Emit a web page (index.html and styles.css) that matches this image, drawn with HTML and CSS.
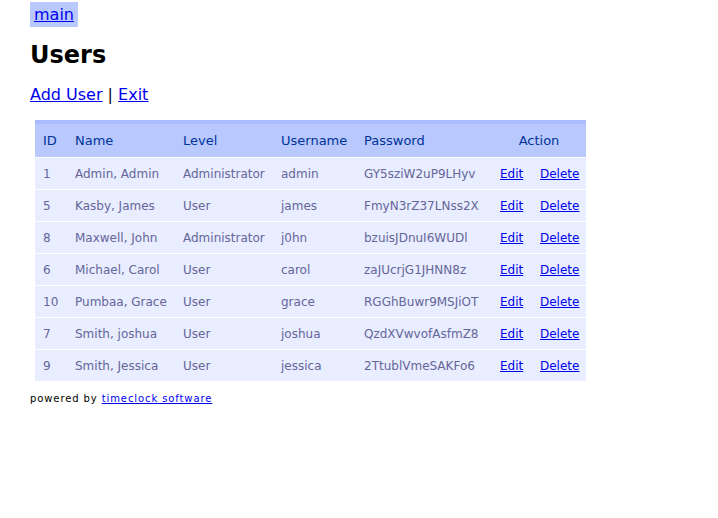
FILE: index.html
```html
<!DOCTYPE html>
<html>
<head>
<meta charset="utf-8">
<title>Users</title>
<link rel="stylesheet" href="styles.css">
</head>
<body>
<div class="page">
  <div class="topnav"><a class="mainlink" href="#">main</a></div>
  <h2 class="title">Users</h2>
  <p class="actions"><a href="#">Add User</a> | <a href="#">Exit</a></p>
  <table class="box-table">
    <colgroup>
      <col class="c-id"><col class="c-name"><col class="c-level"><col class="c-user"><col class="c-pass"><col class="c-edit"><col class="c-del">
    </colgroup>
    <thead>
      <tr><th>ID</th><th>Name</th><th>Level</th><th>Username</th><th>Password</th><th colspan="2" class="center">Action</th></tr>
    </thead>
    <tbody>
      <tr><td>1</td><td>Admin, Admin</td><td>Administrator</td><td>admin</td><td>GY5sziW2uP9LHyv</td><td><a href="#">Edit</a></td><td><a href="#">Delete</a></td></tr>
      <tr><td>5</td><td>Kasby, James</td><td>User</td><td>james</td><td>FmyN3rZ37LNss2X</td><td><a href="#">Edit</a></td><td><a href="#">Delete</a></td></tr>
      <tr><td>8</td><td>Maxwell, John</td><td>Administrator</td><td>j0hn</td><td>bzuisJDnuI6WUDl</td><td><a href="#">Edit</a></td><td><a href="#">Delete</a></td></tr>
      <tr><td>6</td><td>Michael, Carol</td><td>User</td><td>carol</td><td>zaJUcrjG1JHNN8z</td><td><a href="#">Edit</a></td><td><a href="#">Delete</a></td></tr>
      <tr><td>10</td><td>Pumbaa, Grace</td><td>User</td><td>grace</td><td>RGGhBuwr9MSJiOT</td><td><a href="#">Edit</a></td><td><a href="#">Delete</a></td></tr>
      <tr><td>7</td><td>Smith, joshua</td><td>User</td><td>joshua</td><td>QzdXVwvofAsfmZ8</td><td><a href="#">Edit</a></td><td><a href="#">Delete</a></td></tr>
      <tr><td>9</td><td>Smith, Jessica</td><td>User</td><td>jessica</td><td>2TtublVmeSAKFo6</td><td><a href="#">Edit</a></td><td><a href="#">Delete</a></td></tr>
    </tbody>
  </table>
  <p class="footer">powered by <a href="#">timeclock software</a></p>
</div>
</body>
</html>
```
FILE: styles.css
```css
html, body {
  margin: 0;
  padding: 0;
  background: #fff;
}
body {
  font-family: "DejaVu Sans", sans-serif;
  color: #000;
}
a {
  color: #0000ee;
}
.page {
  padding: 2px 30px 0 30px;
}
.topnav {
  height: 25px;
}
.mainlink {
  display: inline-block;
  background: #b9c9fe;
  padding: 3px 4px;
  font-size: 16px;
  line-height: 19px;
}
.title {
  font-size: 24px;
  font-weight: bold;
  line-height: 28px;
  margin: 14px 0 0 0;
}
.actions {
  font-size: 16px;
  line-height: 19px;
  margin: 16px 0 0 0;
}
.box-table {
  margin: 16px 5px 0 5px;
  border-collapse: collapse;
  table-layout: fixed;
  width: 551px;
  text-align: left;
  font-size: 12px;
}
.c-id { width: 32px; }
.c-name { width: 108px; }
.c-level { width: 98px; }
.c-user { width: 83px; }
.c-pass { width: 136px; }
.c-edit { width: 40px; }
.c-del { width: 54px; }
.box-table th {
  font-size: 13px;
  font-weight: normal;
  padding: 8px;
  line-height: 17px;
  background: #b9c9fe;
  border-top: 4px solid #aabcfe;
  border-bottom: 1px solid #fff;
  color: #003399;
  white-space: nowrap;
}
.box-table th.center {
  text-align: center;
}
.box-table td {
  padding: 9px 8px 7px 8px;
  line-height: 15px;
  background: #e8edff;
  border-bottom: 1px solid #fff;
  border-top: 1px solid transparent;
  color: #666699;
  white-space: nowrap;
}
.footer {
  font-size: 10px;
  line-height: 12px;
  letter-spacing: 0.9px;
  margin: 11px 0 0 0;
}
```
